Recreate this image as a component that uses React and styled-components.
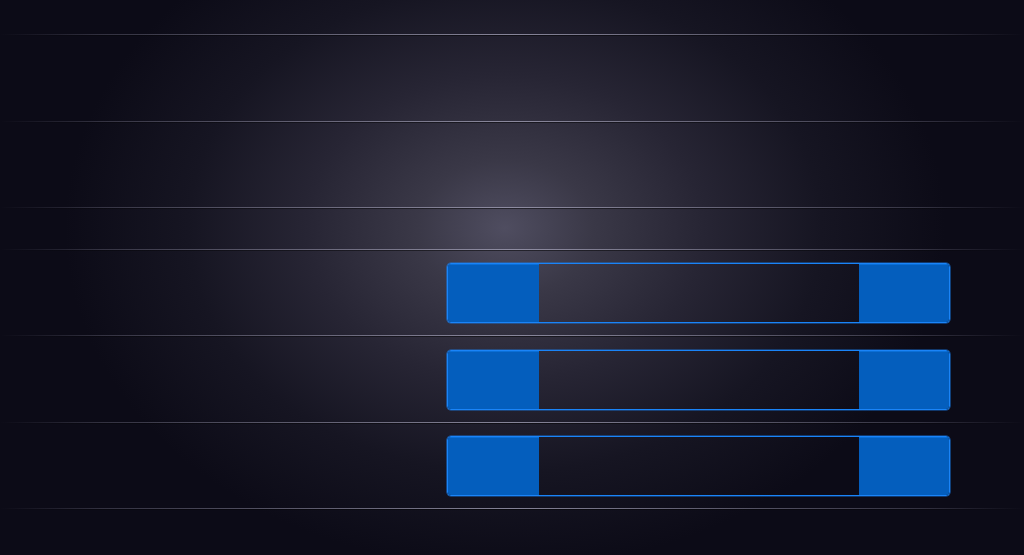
import React from "react";
import styled, { createGlobalStyle } from "styled-components";

const GlobalStyle = createGlobalStyle`
  html, body {
    margin: 0;
    padding: 0;
    background: #0c0b17;
    font-family: "Liberation Sans", Arial, sans-serif;
  }
`;

const Page = styled.div`
  width: 1024px;
  height: 555px;
  overflow: hidden;
  display: flex;
  flex-direction: column;
  background:
    radial-gradient(ellipse 440px 340px at 505px 228px,
      #4f4d60 0%, #3a3847 20%, #272534 45%, #161522 72%, #0c0b17 100%);
`;

const Header = styled.div`
  height: 34px;
  flex: none;
`;

const Divider = styled.div`
  height: 2px;
  flex: none;
  background:
    linear-gradient(90deg, transparent 0%, rgba(140, 138, 160, 0.3) 10%,
      rgba(160, 158, 180, 0.8) 50%, rgba(140, 138, 160, 0.3) 90%, transparent 100%)
      top / 100% 1px no-repeat,
    linear-gradient(90deg, transparent 0%, rgba(0, 0, 0, 0.3) 10%,
      rgba(0, 0, 0, 0.5) 50%, rgba(0, 0, 0, 0.3) 90%, transparent 100%)
      bottom / 100% 1px no-repeat;
`;

const Row = styled.div`
  height: ${p => p.h}px;
  flex: none;
  display: grid;
  grid-template-columns: 447px 503px;
  align-items: center;
`;

const Label = styled.div`
  color: transparent;
`;

const Field = styled.div`
  height: 60px;
  box-sizing: border-box;
  border: 1px solid #1a84f8;
  border-radius: 4px;
  box-shadow: 0 0 0 0.6px rgba(26, 132, 248, 0.75);
  display: grid;
  grid-template-columns: 91px 1fr 90px;
  overflow: hidden;
`;

const Side = styled.div`
  background: #045ebd;
  box-shadow: inset 0 1px 0 #0a6fd8;
`;

const Input = styled.input`
  border: none;
  outline: none;
  background: transparent;
  color: #d8d8e4;
  font: 16px "Liberation Sans", Arial, sans-serif;
  padding: 0 12px;
  min-width: 0;
`;

function Control() {
  return (
    <Field>
      <Side />
      <Input type="text" />
      <Side />
    </Field>
  );
}

const rows = [
  { h: 85 },
  { h: 84 },
  { h: 40 },
  { h: 84, field: true },
  { h: 85, field: true },
  { h: 84, field: true },
];

export default function App() {
  return (
    <>
      <GlobalStyle />
      <Page>
        <Header />
        <Divider />
        {rows.map((r, i) => (
          <React.Fragment key={i}>
            <Row h={r.h}>
              <Label />
              {r.field ? <Control /> : null}
            </Row>
            <Divider />
          </React.Fragment>
        ))}
      </Page>
    </>
  );
}
